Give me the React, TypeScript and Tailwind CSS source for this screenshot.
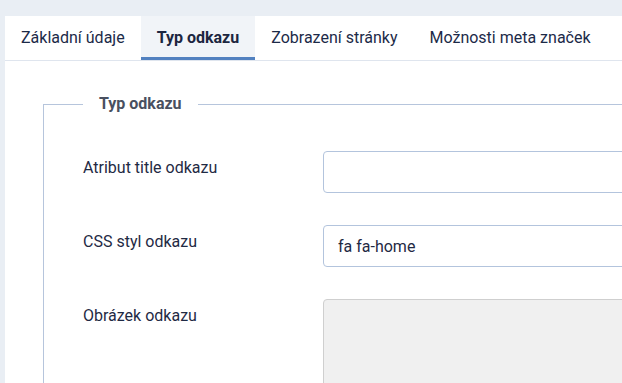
import React from 'react';

const tabs = ['Základní údaje', 'Typ odkazu', 'Zobrazení stránky', 'Možnosti meta značek'];

const Field: React.FC<{ label: string; children: React.ReactNode }> = ({ label, children }) => (
  <div className="flex items-start">
    <label className="w-[240px] shrink-0 pt-[5px] leading-6 text-[16px] text-[#1f2a44]">{label}</label>
    <div className="flex-1">{children}</div>
  </div>
);

export default function App() {
  const active = 1;

  return (
    <div className="h-screen overflow-hidden bg-[#e9eef4] pt-[16px] pl-[5px] font-['Roboto',sans-serif]">
      <div className="w-[900px] h-full bg-white">
        {/* Záložky */}
        <div className="flex border-b border-[#dfe5ee]">
          {tabs.map((tab, i) => (
            <div
              key={tab}
              className={`h-[44px] px-4 flex items-center text-[16px] border-b-[3px] ${
                i === active
                  ? 'bg-[#f1f4f8] border-[#5281c0] font-bold text-[#1c2640]'
                  : 'border-transparent text-[#1c2a48]'
              }`}
            >
              <span className="pt-[3px]">{tab}</span>
            </div>
          ))}
        </div>

        {/* Obsah */}
        <div className="pl-[38px] pt-[31px]">
          <fieldset className="border border-[#b6c5dc] pl-[39px] pr-6 pt-[35px] pb-10">
            <legend className="px-4 text-[16px] font-bold text-[#495060] leading-6">Typ odkazu</legend>
            <div className="flex flex-col gap-[32px]">
              <Field label="Atribut title odkazu">
                <input
                  className="w-full h-[42px] rounded-[4px] border border-[#b3c4dd] px-[14px] text-[16px] text-[#1f2a44] outline-none"
                  defaultValue=""
                />
              </Field>
              <Field label="CSS styl odkazu">
                <input
                  className="w-full h-[42px] rounded-[4px] border border-[#b3c4dd] px-[14px] text-[16px] text-[#1f2a44] outline-none"
                  defaultValue="fa fa-home"
                />
              </Field>
              <Field label="Obrázek odkazu">
                <div className="w-full h-[160px] rounded-[4px] border border-[#cfcfcf] bg-[#f0f0f0]" />
              </Field>
            </div>
          </fieldset>
        </div>
      </div>
    </div>
  );
}
